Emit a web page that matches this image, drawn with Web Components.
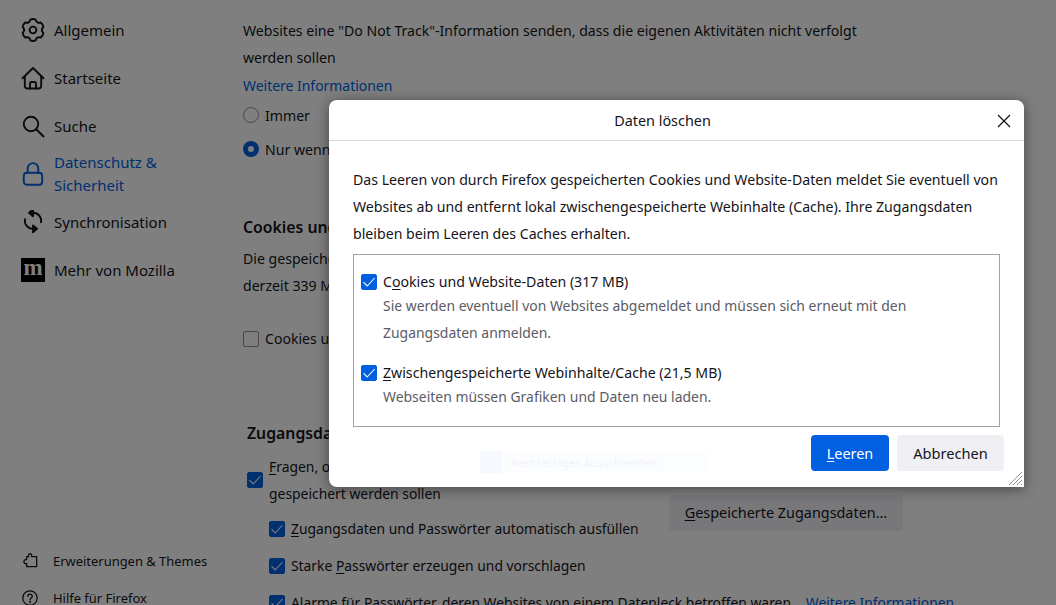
<!DOCTYPE html>
<html lang="de">
<head>
<meta charset="utf-8">
<title>Einstellungen</title>
<style>
  html, body { margin: 0; height: 605px; overflow: hidden; background: #fff; }
  body { font-family: "Noto Sans", "Open Sans", sans-serif; font-size: 14.1px; color: #15141a; }
</style>
</head>
<body>
<pref-page>
  <pref-sidebar slot="side">
    <nav-item label="Allgemein" icon="gear"></nav-item>
    <nav-item label="Startseite" icon="home"></nav-item>
    <nav-item label="Suche" icon="search"></nav-item>
    <nav-item label="Datenschutz &amp; Sicherheit" icon="lock" active></nav-item>
    <nav-item label="Synchronisation" icon="sync"></nav-item>
    <nav-item label="Mehr von Mozilla" icon="moz"></nav-item>
    <side-link slot="foot" label="Erweiterungen &amp; Themes" icon="puzzle"></side-link>
    <side-link slot="foot" label="Hilfe für Firefox" icon="help"></side-link>
  </pref-sidebar>
  <pref-content slot="main"></pref-content>
</pref-page>
<clear-dialog>
  <clear-option slot="options" checked key="o" label="Cookies und Website-Daten (317 MB)">
    Sie werden eventuell von Websites abgemeldet und müssen sich erneut mit den Zugangsdaten anmelden.
  </clear-option>
  <clear-option slot="options" checked key="Z" label="Zwischengespeicherte Webinhalte/Cache (21,5 MB)">
    Webseiten müssen Grafiken und Daten neu laden.
  </clear-option>
</clear-dialog>

<script>
  // six lobed cog, same outline the sidebar uses
  function gearPath() {
    let d = '';
    for (let k = 0; k < 6; k++) {
      const a = (k * 60 - 90) * Math.PI / 180;
      const pt = (off, r) => `${(12 + r * Math.cos(a + off)).toFixed(2)} ${(12 + r * Math.sin(a + off)).toFixed(2)}`;
      const step = 14 * Math.PI / 180;
      const mid = 30 * Math.PI / 180;
      d += `${k ? 'Q' + pt(-mid, 7.2) : 'M'} ${pt(-step, 10.8)} `;
      d += `Q${pt(0, 11.6)} ${pt(step, 10.8)} `;
    }
    const first = (-90 - 14) * Math.PI / 180;
    const close = (-90 - 30) * Math.PI / 180;
    d += `Q${(12 + 7.2 * Math.cos(close)).toFixed(2)} ${(12 + 7.2 * Math.sin(close)).toFixed(2)} ${(12 + 10.8 * Math.cos(first)).toFixed(2)} ${(12 + 10.8 * Math.sin(first)).toFixed(2)}Z`;
    return d;
  }

  const ICONS = {
    gear: `<path d="${gearPath()}"/><circle cx="12" cy="12" r="3.4"/>`,
    home: '<path d="M1.5 12.2 12 2l10.5 10.2"/><path d="M3.8 10.5V20a2.5 2.5 0 0 0 2.5 2.5h11.4a2.5 2.5 0 0 0 2.5-2.5v-9.5"/><path d="M9 22.5V17.5a1.5 1.5 0 0 1 1.5-1.5h3a1.5 1.5 0 0 1 1.5 1.5v5"/>',
    search: '<circle cx="10" cy="10" r="7.2"/><path d="m15.5 15.5 7 7"/>',
    lock: '<rect x="2.8" y="10.8" width="18.4" height="12" rx="3"/><path d="M6.7 10.8V6.4a5.3 5.3 0 0 1 10.6 0v4.4"/>',
    sync: '<g transform="translate(0 -1.2)"><path d="M20 13.5A8 8 0 0 0 12 4"/><path d="M4 10.5A8 8 0 0 0 12 20"/><path d="M8 4l4-3.4v6.8z" fill="currentColor"/><path d="M16 20l-4-3.4v6.8z" fill="currentColor"/></g>',
    puzzle: '<path d="M10 7C8.5 1 15.5 1 14.5 7H22V22H7V17.5C1.5 19 1.5 10 7 11.5V7Z" transform="translate(0 -1.5)"/>',
    help: '<circle cx="12" cy="12" r="10.8"/><path d="M8.8 9.5c0-4.4 6.6-4.2 6.6-.3 0 2.7-3.2 2.6-3.2 5.3"/><circle cx="12.2" cy="17.7" r=".7" fill="currentColor"/>'
  };

  function iconSvg(name, size, stroke) {
    return `<svg viewBox="0 0 24 24" width="${size}" height="${size}" fill="none" stroke="currentColor" stroke-width="${stroke}" stroke-linecap="round" stroke-linejoin="round">${ICONS[name]}</svg>`;
  }

  class PrefPage extends HTMLElement {
    constructor() {
      super();
      this.attachShadow({ mode: 'open' }).innerHTML = `
        <style>
          :host { display: grid; grid-template-columns: 243px 620px; height: 605px; overflow: hidden; }
          .scrim { position: absolute; inset: 0; background: rgba(0, 0, 0, .5); }
        </style>
        <slot name="side"></slot>
        <slot name="main"></slot>
        <div class="scrim"></div>
      `;
    }
  }

  class PrefSidebar extends HTMLElement {
    constructor() {
      super();
      this.attachShadow({ mode: 'open' }).innerHTML = `
        <style>
          :host { display: flex; flex-direction: column; height: 616px; padding-top: 6px; box-sizing: border-box; }
          .foot { margin-top: auto; display: flex; flex-direction: column; }
        </style>
        <slot></slot>
        <div class="foot"><slot name="foot"></slot></div>
      `;
    }
  }

  class NavItem extends HTMLElement {
    constructor() {
      super();
      const name = this.getAttribute('icon');
      const icon = name === 'moz' ? '<span class="moz">m</span>' : iconSvg(name, 24, 1.9);
      this.attachShadow({ mode: 'open' }).innerHTML = `
        <style>
          :host { display: flex; align-items: center; height: 48px; padding-left: 21px; gap: 9px; font-size: 15px; line-height: 23px; color: #15141a; }
          :host([active]) { color: #0060df; }
          .ic { width: 24px; height: 24px; display: flex; align-items: center; justify-content: center; flex: none; }
          .label { width: 135px; }
          .moz { width: 24px; height: 24px; background: #000; color: #fff; font: bold 23px/20px "Liberation Serif", serif; text-align: center; overflow: hidden; }
        </style>
        <span class="ic">${icon}</span>
        <span class="label">${this.getAttribute('label').replace('&', '&amp;')}</span>
      `;
    }
  }

  class SideLink extends HTMLElement {
    constructor() {
      super();
      this.attachShadow({ mode: 'open' }).innerHTML = `
        <style>
          :host { display: flex; align-items: center; height: 37px; padding-left: 22px; gap: 15px; font-size: 12.95px; }
          .ic { display: flex; flex: none; }
        </style>
        <span class="ic">${iconSvg(this.getAttribute('icon'), 16, 1.9)}</span>
        <span>${this.getAttribute('label').replace('&', '&amp;')}</span>
      `;
    }
  }

  // checkbox drawn once, used by page and dialog
  class PrefCheck extends HTMLElement {
    constructor() {
      super();
      this.attachShadow({ mode: 'open' }).innerHTML = `
        <style>
          :host { display: inline-flex; width: 16px; height: 16px; flex: none; box-sizing: border-box; border-radius: 2px; border: 1px solid #8f8f9d; background: #fff; }
          :host([checked]) { background: #0060df; border-color: #0060df; }
          svg { display: none; width: 14px; height: 14px; }
          :host([checked]) svg { display: block; }
        </style>
        <svg viewBox="0 0 14 14" fill="none" stroke="#fff" stroke-width="1.1"><path d="M1.5 7.2 5.2 11 12.6 3"/></svg>
      `;
    }
  }

  class PrefRadio extends HTMLElement {
    constructor() {
      super();
      this.attachShadow({ mode: 'open' }).innerHTML = `
        <style>
          :host { display: flex; align-items: center; gap: 6px; height: 34px; white-space: nowrap; }
          i { width: 16px; height: 16px; box-sizing: border-box; border-radius: 50%; border: 1px solid #8f8f9d; background: #fff; flex: none; }
          :host([checked]) i { border: 5px solid #0060df; }
        </style>
        <i></i><slot></slot>
      `;
    }
  }

  class CheckRow extends HTMLElement {
    constructor() {
      super();
      this.attachShadow({ mode: 'open' }).innerHTML = `
        <style>
          :host { display: flex; align-items: center; gap: 6px; line-height: 27px; white-space: nowrap; }
        </style>
        <pref-check ${this.hasAttribute('off') ? '' : 'checked'}></pref-check>
        <span><slot></slot></span>
      `;
    }
  }

  class PrefContent extends HTMLElement {
    constructor() {
      super();
      this.attachShadow({ mode: 'open' }).innerHTML = `
        <style>
          :host { display: block; padding-top: 17px; font-size: 14.1px; line-height: 27px; white-space: nowrap; }
          p { margin: 0; }
          a { color: #0060df; }
          .more { margin-top: 1px; font-size: 13.95px; }
          h2 { margin: 0; font-size: 15.8px; line-height: 27px; font-weight: 600; }
          .radios { margin-top: -1px; }
          .cookies { margin-top: 48px; }
          .cookies p { margin-top: 4px; }
          .keep { margin-top: 26px; }
          .logins { margin-top: 68px; padding-left: 4px; }
          .ask { margin-top: 6px; font-size: 13.9px; }
          .subs { padding-left: 22px; display: flex; flex-direction: column; gap: 10px; margin-top: 8px; font-size: 13.85px; }
          .subs a { margin-left: 4px; }
          .btn { position: absolute; left: 669px; top: 495px; width: 234px; height: 36px; box-sizing: border-box; background: #f0f0f4; border-radius: 4px; text-align: center; line-height: 36px; font-size: 14.4px; }
          u { text-underline-offset: 2px; }
        </style>
        <p>Websites eine "Do Not Track"-Information senden, dass die eigenen Aktivitäten nicht verfolgt<br>werden sollen</p>
        <p class="more"><a>Weitere Informationen</a></p>
        <div class="radios">
          <pref-radio>Immer</pref-radio>
          <pref-radio checked>Nur wenn Firefox bekannte Elemente zur Aktivitätenverfolgung blockieren soll</pref-radio>
        </div>
        <section class="cookies">
          <h2>Cookies und Website-Daten</h2>
          <p>Die gespeicherten Cookies, Website-Daten und der Cache belegen<br>derzeit 339 MB Speicherplatz.</p>
          <check-row class="keep" off>Cookies und Website-Daten beim Beenden von Firefox löschen</check-row>
        </section>
        <section class="logins">
          <h2>Zugangsdaten und Passwörter</h2>
          <check-row class="ask"><u>F</u>ragen, ob Zugangsdaten und Passwörter für Websites<br>gespeichert werden sollen</check-row>
          <div class="subs">
            <check-row><u>Z</u>ugangsdaten und Passwörter automatisch ausfüllen</check-row>
            <check-row>Starke <u>P</u>asswörter erzeugen und vorschlagen</check-row>
            <check-row>Alarme für Passwörter, deren Websites von einem Datenleck betroffen waren. &nbsp;<a>Weitere Informationen</a></check-row>
          </div>
        </section>
        <div class="btn"><u>G</u>espeicherte Zugangsdaten...</div>
      `;
    }
  }

  class ClearOption extends HTMLElement {
    constructor() {
      super();
      const label = this.getAttribute('label');
      const key = this.getAttribute('key');
      const at = label.indexOf(key);
      const text = `${label.slice(0, at)}<u>${key}</u>${label.slice(at + 1)}`;
      this.attachShadow({ mode: 'open' }).innerHTML = `
        <style>
          :host { display: grid; grid-template-columns: 16px 1fr; column-gap: 6px; align-items: center; line-height: 27px; font-size: 14.15px; }
          u { text-underline-offset: 2px; }
          .desc { grid-column: 2; color: #5b5b66; font-size: 13.95px; margin-top: -3px; }
        </style>
        <pref-check checked></pref-check>
        <span>${text}</span>
        <span class="desc"><slot></slot></span>
      `;
    }
  }

  class ClearDialog extends HTMLElement {
    constructor() {
      super();
      this.attachShadow({ mode: 'open' }).innerHTML = `
        <style>
          :host { position: absolute; left: 329px; top: 100px; width: 695px; height: 387px; box-sizing: border-box; display: flex; flex-direction: column; background: #fff; border-radius: 8px 8px 0 8px; box-shadow: 0 2px 14px rgba(0, 0, 0, .45); font-size: 14.15px; color: #15141a; }
          header { height: 41px; flex: none; box-sizing: border-box; border-bottom: 1px solid #d7d7db; display: flex; align-items: center; justify-content: center; position: relative; font-size: 14.4px; padding-right: 28px; }
          .close { position: absolute; right: 13px; top: 14px; display: flex; }
          main { flex: 1; padding: 25px 24px 0; line-height: 27px; display: flex; flex-direction: column; }
          p { margin: 0; }
          .box { margin-top: 7px; height: 173px; box-sizing: border-box; border: 1px solid #a3a3a3; padding: 13px 7px; display: flex; flex-direction: column; gap: 13px; }
          footer { display: flex; justify-content: flex-end; gap: 8px; padding: 0 20px 16px; font-size: 14.4px; }
          button { height: 36px; border: 0; border-radius: 4px; font: inherit; color: #15141a; background: #f0f0f4; padding: 0; }
          .ok { width: 78px; background: #0060df; color: #fff; }
          .no { width: 107px; font-size: 14.6px; }
          u { text-underline-offset: 2px; }
          .ghost { position: absolute; left: 151px; top: 351px; width: 229px; height: 22px; display: flex; align-items: center; gap: 9px; background: #fcfdff; color: #f1f3f8; font-size: 11.3px; }
          .ghost i { width: 22px; height: 22px; background: #f6f9ff; flex: none; }
          .grip { position: absolute; right: 1px; bottom: 1px; }
        </style>
        <header>
          <span>Daten löschen</span>
          <span class="close"><svg width="14" height="14" viewBox="0 0 14 14" stroke="#15141a" stroke-width="1.3" fill="none"><path d="M1 1l12 12M13 1 1 13"/></svg></span>
        </header>
        <main>
          <p>Das Leeren von durch Firefox gespeicherten Cookies und Website-Daten meldet Sie eventuell von Websites ab und entfernt lokal zwischengespeicherte Webinhalte (Cache). Ihre Zugangsdaten bleiben beim Leeren des Caches erhalten.</p>
          <div class="box"><slot name="options"></slot></div>
        </main>
        <div class="ghost"><i></i>Rechteckiges Ausschneiden</div>
        <footer>
          <button class="ok"><u>L</u>eeren</button>
          <button class="no">Abbrechen</button>
        </footer>
        <svg class="grip" width="15" height="15" viewBox="0 0 15 15" stroke="#8f8f8f" stroke-width="1" fill="none"><path d="M1 14 14 1M5 14 14 5M9 14l5-5M13 14l1-1"/></svg>
      `;
    }
  }

  customElements.define('pref-page', PrefPage);
  customElements.define('pref-sidebar', PrefSidebar);
  customElements.define('nav-item', NavItem);
  customElements.define('side-link', SideLink);
  customElements.define('pref-check', PrefCheck);
  customElements.define('pref-radio', PrefRadio);
  customElements.define('check-row', CheckRow);
  customElements.define('pref-content', PrefContent);
  customElements.define('clear-option', ClearOption);
  customElements.define('clear-dialog', ClearDialog);
</script>
</body>
</html>
